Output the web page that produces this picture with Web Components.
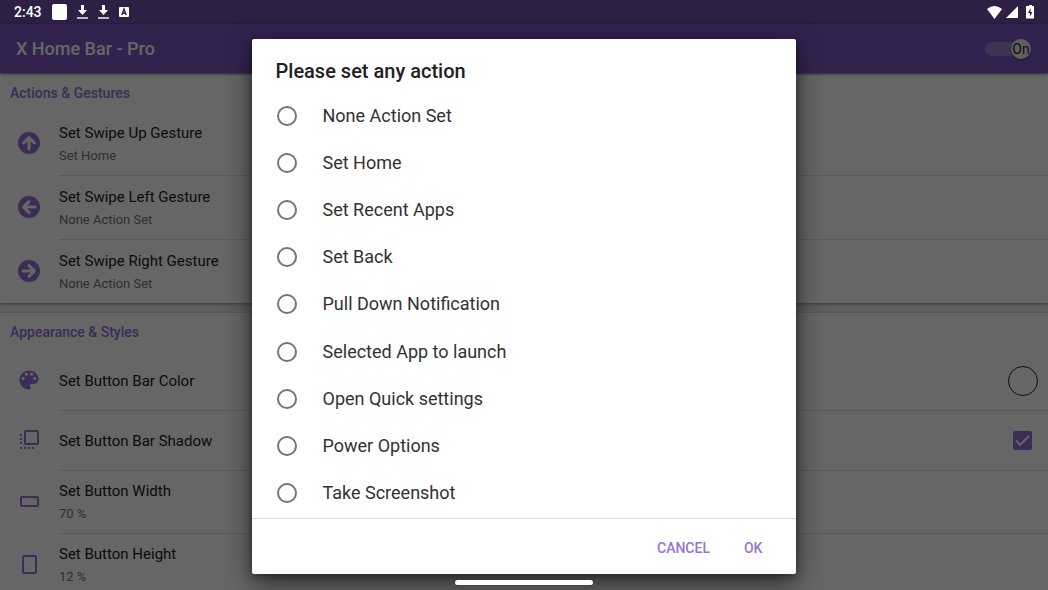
<!DOCTYPE html>
<html lang="en">
<head>
<meta charset="utf-8">
<title>X Home Bar - Pro</title>
<style>
html, body { height: 100%; margin: 0; overflow: hidden; }
body { font-family: Roboto, "Noto Sans", sans-serif; background: #ececec; color: #212121; }
</style>
</head>
<body>
<home-bar-app></home-bar-app>
<script>
const define = (name, html, setup) => {
  const template = document.createElement('template');
  template.innerHTML = `<style>*{box-sizing:border-box}</style>${html}`;
  customElements.define(name, class extends HTMLElement {
    constructor() {
      super();
      this.attachShadow({ mode: 'open' }).append(template.content.cloneNode(true));
    }
    connectedCallback() { if (setup) setup(this, this.shadowRoot); }
  });
};

const arrow = turn => `<circle cx="12" cy="12" r="11"/><path transform="rotate(${turn} 12 12)" d="M12 18V7M6.500 12L12 6.500l5.500 5.500" fill="none" stroke="#fff" stroke-width="3" stroke-linecap="round" stroke-linejoin="round"/>`;
const GLYPHS = {
  up: arrow(0),
  left: arrow(-90),
  right: arrow(90),
  palette: '<path d="M12 2.500C6.700 2.500 2.500 6.700 2.500 12s4.200 9.500 9.500 9.500c.930 0 1.670-.740 1.670-1.670 0-.430-.170-.820-.430-1.120-.260-.300-.430-.690-.430-1.110 0-.920.750-1.670 1.670-1.670H16.500c3 0 5-2.300 5-5C21.500 6.300 17.300 2.500 12 2.500zM6.200 12a1.600 1.600 0 1 1 0-3.200 1.600 1.600 0 0 1 0 3.200zm3.200-4.200a1.600 1.600 0 1 1 0-3.200 1.600 1.600 0 0 1 0 3.200zm5.200 0a1.600 1.600 0 1 1 0-3.200 1.600 1.600 0 0 1 0 3.200zm3.200 4.200a1.600 1.600 0 1 1 0-3.200 1.600 1.600 0 0 1 0 3.200z" fill-rule="evenodd"/>',
  shadow: '<rect x="8" y="3" width="13" height="13" rx="1" fill="none" stroke="currentColor" stroke-width="2"/><path d="M3 6h2v2H3zM3 10h2v2H3zM3 14h2v2H3zM3 19h2v2H3zM7 19h2v2H7zM11 19h2v2h-2zM15 19h2v2h-2z"/>',
  width: '<rect x="4" y="7" width="17" height="9" rx="1" fill="none" stroke="currentColor" stroke-width="2"/>',
  height: '<rect x="6" y="3" width="13" height="17" rx="1" fill="none" stroke="currentColor" stroke-width="2"/>'
};

define('ui-glyph', `
<style>
:host { display: block; width: 24px; height: 24px; margin-bottom: 2px; color: #9570d2; }
svg { display: block; width: 100%; height: 100%; fill: currentColor; }
</style><svg viewBox="0 0 24 24" aria-hidden="true"></svg>`, (host, root) => {
  root.querySelector('svg').innerHTML = GLYPHS[host.getAttribute('name')];
});

define('status-bar', `
<style>
:host { display: flex; align-items: center; justify-content: space-between; height: 24px; padding: 0 14px; color: #fff; font-weight: 500; font-size: 14px; }
div { display: flex; align-items: center; }
.left { gap: 10px; }
.right { gap: 4px; }
svg { display: block; fill: #fff; }
</style>
<div class="left">
  <time>2:43</time>
  <svg width="15" height="16"><rect width="15" height="16" rx="2"/></svg>
  <svg width="11" height="16"><path d="M4 1h3v5h3l-4.500 5L1 6h3z"/><path d="M0 13h11v2H0z" opacity=".7"/></svg>
  <svg width="11" height="16"><path d="M4 1h3v5h3l-4.500 5L1 6h3z"/><path d="M0 13h11v2H0z" opacity=".7"/></svg>
  <svg width="10" height="12"><rect y="1" width="10" height="10" rx="1"/><path d="M2.800 9L5 3l2.200 6M3.500 7.300h3" fill="none" stroke="#2e2045" stroke-width="1.400"/></svg>
</div>
<div class="right">
  <svg width="15" height="13"><path d="M0 3Q7.500-3 15 3L7.500 13z"/></svg>
  <svg width="12" height="12"><path d="M0 12L12 0v12z"/></svg>
  <svg width="12" height="14"><path d="M7 0h3v1h2v12.500H4V1h3z"/><path d="M8.500 3L6 8h2v3.500L10.500 7h-2z" fill="#2e2045"/></svg>
</div>`);

define('app-bar', `
<style>
:host { display: flex; align-items: center; justify-content: space-between; height: 49px; padding: 0 17px 0 16px; background: #7e57c2; color: #fff; box-shadow: 0 1px 3px #0008; position: relative; }
h1 { margin: 0; font-size: 18px; line-height: 24px; font-weight: 500; }
label { position: relative; display: flex; align-items: center; justify-content: flex-end; width: 46px; height: 24px; color: #212121; font-size: 14px; }
input { appearance: none; position: absolute; inset: 5px 6px 5px 0; margin: 0; border-radius: 7px; background: #9d80cf; }
span { position: relative; width: 20px; height: 20px; border-radius: 50%; background: #f1f1f1; line-height: 21px; box-shadow: 0 1px 2px #0006; white-space: nowrap; display: flex; justify-content: center; }
</style>
<h1>X Home Bar - Pro</h1>
<label><input type="checkbox" role="switch" checked><span>On</span></label>`);

define('settings-card', `
<style>
:host { display: block; background: #fff; box-shadow: 0 1px 3px #0006; }
h2 { margin: 0; padding: 9px 10px; font-size: 14px; line-height: 20px; font-weight: 500; color: #9570d2; }
</style><h2></h2><slot></slot>`, (host, root) => {
  root.querySelector('h2').textContent = host.getAttribute('heading');
});

define('settings-row', `
<style>
:host { display: flex; align-items: center; padding-left: 17px; }
.body { flex: 1; display: flex; align-items: center; justify-content: space-between; min-height: var(--row, 64px); margin-left: 18px; padding-right: 10px; border-bottom: 1px solid #e0e0e0; }
:host([last]) .body { min-height: 63px; border-bottom: 0; }
p { margin: 0; }
.title { font-size: 15px; line-height: 24px; }
.detail { font-size: 13px; line-height: 22px; color: #757575; }
.detail:empty { display: none; }
</style>
<ui-glyph></ui-glyph>
<div class="body"><div><p class="title"></p><p class="detail"></p></div><slot></slot></div>`, (host, root) => {
  const glyph = document.createElement('ui-glyph');
  glyph.setAttribute('name', host.getAttribute('glyph'));
  root.querySelector('ui-glyph').replaceWith(glyph);
  root.querySelector('.title').textContent = host.getAttribute('label');
  root.querySelector('.detail').textContent = host.getAttribute('detail') || '';
});

define('action-option', `
<style>
:host { display: grid; }
label { display: flex; align-items: center; gap: 26px; padding: 0 25px; font-size: 18px; line-height: 24px; color: #323232; }
input { appearance: none; width: 20px; height: 20px; margin: 0; border: 2px solid #757575; border-radius: 50%; }
input:checked { background: radial-gradient(#9575cd 5px, transparent 6px); }
</style>
<label><input type="radio" name="action"><slot></slot></label>`);

define('action-dialog', `
<style>
:host { display: flex; flex-direction: column; width: 52%; background: #fff; border-radius: 2px; box-shadow: 0 10px 28px #0008, 0 2px 8px #0006; }
h2 { margin: 0; padding: 20px 24px 0; font-size: 20px; line-height: 24px; font-weight: 500; color: #212121; }
.list { display: grid; grid-auto-rows: 1fr; min-height: 436px; padding: 9px 0 1px; border-bottom: 1px solid #dcdcdc; }
footer { display: flex; justify-content: flex-end; gap: 16px; padding: 11px 25px 8px; }
button { height: 36px; border: 0; padding: 0 9px; background: none; color: #9575cd; font: 500 14px/20px Roboto, sans-serif; }
</style>
<h2>Please set any action</h2>
<div class="list" role="radiogroup" aria-label="Please set any action"><slot></slot></div>
<footer><button>CANCEL</button><button>OK</button></footer>`);

define('home-bar-app', `
<style>
:host { display: block; height: 100%; position: relative; overflow: hidden; }
.top { background: #7350ac; height: 24px; }
main { display: grid; gap: 10px; padding-top: 1px; }
.flat { --row: 60px; }
.tall { --row: 63px; }
.swatch { width: 30px; height: 30px; border: 1px solid #222; border-radius: 50%; padding: 0; background: #fff; }
.tick { display: grid; margin-right: 6px; }
.tick input { appearance: none; grid-area: 1/1; width: 19px; height: 19px; margin: 0; background: #9570d2; border-radius: 2px; }
.tick svg { grid-area: 1/1; width: 19px; height: 19px; fill: none; stroke: #fff; stroke-width: 2; pointer-events: none; }
.scrim { position: absolute; inset: 0; background: rgba(0,0,0,.6); display: flex; flex-direction: column; align-items: center; }
status-bar { align-self: stretch; }
action-dialog { margin-top: 15px; }
.handle { width: 138px; height: 5px; margin-top: 6px; border-radius: 3px; background: #fff; box-shadow: 0 0 2px #0006; flex: none; }
</style>
<div class="top"></div>
<app-bar></app-bar>
<main>
  <settings-card heading="Actions &amp; Gestures">
    <settings-row glyph="up" label="Set Swipe Up Gesture" detail="Set Home"></settings-row>
    <settings-row glyph="left" label="Set Swipe Left Gesture" detail="None Action Set"></settings-row>
    <settings-row last glyph="right" label="Set Swipe Right Gesture" detail="None Action Set"></settings-row>
  </settings-card>
  <settings-card heading="Appearance &amp; Styles">
    <settings-row class="flat" glyph="palette" label="Set Button Bar Color"><button class="swatch" aria-label="Bar color"></button></settings-row>
    <settings-row class="flat" glyph="shadow" label="Set Button Bar Shadow"><label class="tick"><input type="checkbox" checked aria-label="Bar shadow"><svg viewBox="0 0 19 19"><path d="M3 9l4 5 9-9"/></svg></label></settings-row>
    <settings-row class="tall" glyph="width" label="Set Button Width" detail="70 %"></settings-row>
    <settings-row class="tall" glyph="height" label="Set Button Height" detail="12 %"></settings-row>
  </settings-card>
</main>
<div class="scrim">
  <status-bar></status-bar>
  <action-dialog role="dialog" aria-modal="true" aria-label="Please set any action">
    <action-option>None Action Set</action-option>
    <action-option>Set Home</action-option>
    <action-option>Set Recent Apps</action-option>
    <action-option>Set Back</action-option>
    <action-option>Pull Down Notification</action-option>
    <action-option>Selected App to launch</action-option>
    <action-option>Open Quick settings</action-option>
    <action-option>Power Options</action-option>
    <action-option>Take Screenshot</action-option>
  </action-dialog>
  <div class="handle"></div>
</div>`);
</script>
</body>
</html>
